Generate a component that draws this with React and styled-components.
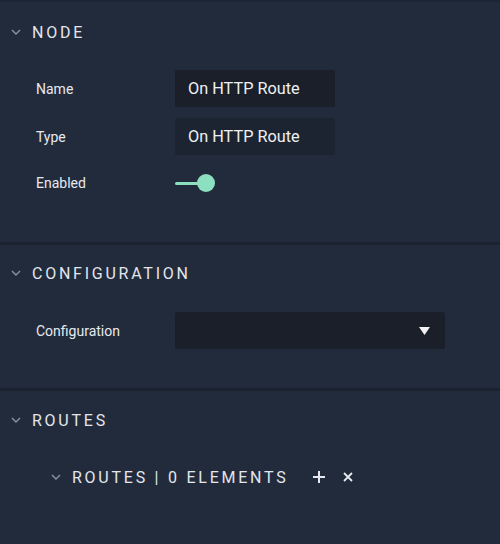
import React from "react";
import styled, { createGlobalStyle } from "styled-components";

const Global = createGlobalStyle`
  html, body { margin: 0; padding: 0; background: #222b3c; }
  body { font-family: Roboto, "Liberation Sans", sans-serif; }
`;

const Panel = styled.div`
  width: 500px;
  height: 544px;
  background: #222b3c;
  border-top: 2px solid #1d2433;
  box-sizing: border-box;
  overflow: hidden;
`;

const Section = styled.section`
  padding: ${(p) => p.$pt}px 0 ${(p) => p.$pb}px;
  border-bottom: ${(p) => (p.$last ? "none" : "3px solid #1b2230")};
`;

const Header = styled.div`
  height: 40px;
  display: flex;
  align-items: center;
  padding-left: ${(p) => p.$indent || 11}px;
  gap: 11px;
  color: #e3e6ec;
  font-size: 16px;
  letter-spacing: 2.75px;
  font-weight: 400;
`;

const Body = styled.div`
  margin-top: ${(p) => p.$mt}px;
  display: flex;
  flex-direction: column;
  gap: 11px;
`;

const Row = styled.div`
  display: grid;
  grid-template-columns: 139px 1fr;
  align-items: center;
  padding-left: 36px;
  min-height: ${(p) => p.$h || 37}px;
`;

const Label = styled.span`
  font-size: 14px;
  color: #e6e9ef;
`;

const Input = styled.div`
  width: 160px;
  height: 37px;
  box-sizing: border-box;
  background: ${(p) => (p.$dim ? "#1d2431" : "#1a1f29")};
  border-radius: 2px;
  display: flex;
  align-items: center;
  padding-left: 13px;
  font-size: 16.3px;
  color: #eef0f4;
`;

const Select = styled.div`
  width: 270px;
  height: 37px;
  box-sizing: border-box;
  background: #1a1f29;
  border-radius: 3px;
  display: flex;
  align-items: center;
  justify-content: flex-end;
  padding-right: 15px;
`;

const Toggle = styled.div`
  position: relative;
  width: 42px;
  height: 20px;
  display: flex;
  align-items: center;
`;

const Track = styled.div`
  width: 28px;
  height: 3px;
  background: #8de0bf;
  border-radius: 2px;
`;

const Knob = styled.div`
  position: absolute;
  left: 22px;
  top: 1px;
  width: 18px;
  height: 18px;
  border-radius: 50%;
  background: #8de0bf;
`;

const Actions = styled.div`
  display: flex;
  align-items: center;
  gap: 17px;
  margin-left: 13px;
`;

const Chevron = ({ color = "#8a93a3" }) => (
  <svg width="10" height="6" viewBox="0 0 10 6">
    <path d="M1 1 L5 5 L9 1" fill="none" stroke={color} strokeWidth="1.4" />
  </svg>
);

const Caret = () => (
  <svg width="11" height="8" viewBox="0 0 11 8">
    <path d="M0 0 H11 L5.5 8 Z" fill="#f2f2f5" />
  </svg>
);

const Plus = () => (
  <svg width="14" height="14" viewBox="0 0 14 14">
    <path d="M7 1 V13 M1 7 H13" stroke="#e6e9ef" strokeWidth="2" />
  </svg>
);

const Cross = () => (
  <svg width="10" height="10" viewBox="0 0 10 10">
    <path d="M1 1 L9 9 M9 1 L1 9" stroke="#e6e9ef" strokeWidth="1.8" />
  </svg>
);

export default function App() {
  return (
    <>
      <Global />
      <Panel>
        <Section $pt={10} $pb={42}>
          <Header>
            <Chevron />
            <span>NODE</span>
          </Header>
          <Body $mt={18}>
            <Row>
              <Label>Name</Label>
              <Input>On HTTP Route</Input>
            </Row>
            <Row>
              <Label>Type</Label>
              <Input $dim>On HTTP Route</Input>
            </Row>
            <Row $h={34}>
              <Label>Enabled</Label>
              <Toggle>
                <Track />
                <Knob />
              </Toggle>
            </Row>
          </Body>
        </Section>
        <Section $pt={8} $pb={39}>
          <Header>
            <Chevron />
            <span>CONFIGURATION</span>
          </Header>
          <Body $mt={19}>
            <Row>
              <Label>Configuration</Label>
              <Select>
                <Caret />
              </Select>
            </Row>
          </Body>
        </Section>
        <Section $pt={9} $pb={0} $last>
          <Header>
            <Chevron />
            <span>ROUTES</span>
          </Header>
          <Body $mt={17}>
            <Header $indent={51}>
              <Chevron />
              <span>ROUTES | 0 ELEMENTS</span>
              <Actions>
                <Plus />
                <Cross />
              </Actions>
            </Header>
          </Body>
        </Section>
      </Panel>
    </>
  );
}
